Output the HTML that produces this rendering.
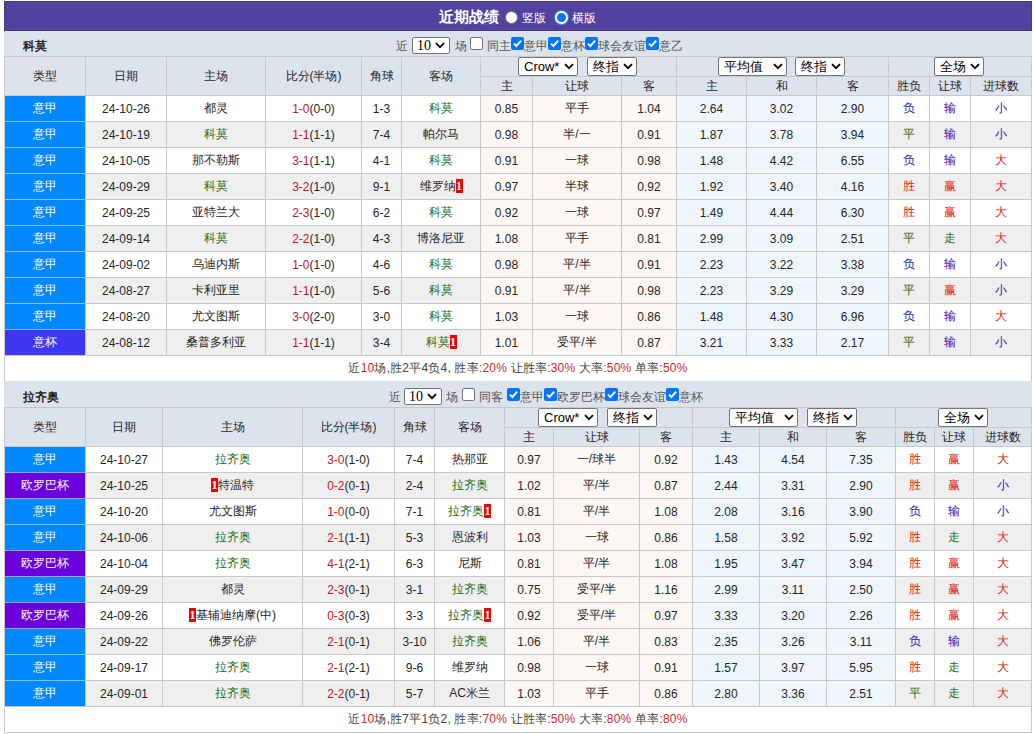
<!DOCTYPE html>
<html><head><meta charset="utf-8"><style>
html,body{margin:0;padding:0;background:#fff;width:1035px;height:734px;overflow:hidden;font-family:"Liberation Sans", sans-serif;}
#root>div{position:absolute;box-sizing:border-box;}
.t{white-space:nowrap;overflow:visible;}
.rc{display:inline-block;background:#e00;color:#fff;font-weight:bold;font-family:"Liberation Serif",serif;font-size:12px;line-height:14px;height:14px;width:7px;text-align:center;vertical-align:middle;position:relative;top:-1px;}
.sel{background:#fff;border:1px solid #767676;border-radius:2px;display:flex;align-items:center;justify-content:space-between;padding:0 3px 0 5px;font-size:13px;color:#000;line-height:16px;}
.sel svg{flex:none;}
.cb{width:13px;height:13px;border-radius:2px;}
.cb.on{background:#0075ff;}
.cb.off{background:#fff;border:1px solid #767676;}
.cb svg{position:absolute;left:0;top:0;}
.radio{width:13px;height:13px;border-radius:50%;}
.radio.off{background:#fff;border:1px solid #767676;}
.radio.on{background:#0075ff;border:2px solid #fff;box-shadow:0 0 0 1px #3d8cf5;}

</style></head><body><div id="root" style="position:relative;width:1035px;height:734px">
<div style="left:4px;top:1px;width:1028px;height:30px;background:#5341a0;border:1px solid #463a86;"></div>
<div class="t" style="left:439px;top:2px;width:61px;height:30px;line-height:30px;color:#fff;font-size:15px;font-weight:bold;text-align:left;">近期战绩</div>
<div style="left:4px;top:31px;width:1028px;height:25px;background:#dce3ed;"></div>
<div class="t" style="left:23px;top:34px;width:24px;height:25px;line-height:25px;color:#262626;font-size:12px;font-weight:bold;text-align:left;">科莫</div>
<div class="t" style="left:396px;top:38px;color:#555;font-size:12px;line-height:16px;white-space:nowrap">近</div>
<div class="sel" style="left:412px;top:37px;width:38px;height:17px;padding-right:4px;padding-left:4px;"><span style="font-family:'Liberation Serif', serif;font-size:14px;position:relative;top:0px;">10</span><svg width="10" height="7" viewBox="0 0 10 7"><path d="M1 1.2 L5 5.2 L9 1.2" stroke="#000" stroke-width="1.8" fill="none"/></svg></div>
<div class="t" style="left:455px;top:38px;color:#555;font-size:12px;line-height:16px;white-space:nowrap">场</div>
<div class="cb off" style="left:470px;top:37px"></div>
<div class="t" style="left:487px;top:38px;color:#555;font-size:12px;line-height:16px;white-space:nowrap">同主</div>
<div class="cb on" style="left:511px;top:37px"><svg width="13" height="13" viewBox="0 0 13 13"><path d="M3 6.6 L5.4 9 L10.2 3.6" stroke="#fff" stroke-width="1.9" fill="none"/></svg></div>
<div class="t" style="left:524px;top:38px;color:#555;font-size:12px;line-height:16px;white-space:nowrap">意甲</div>
<div class="cb on" style="left:548px;top:37px"><svg width="13" height="13" viewBox="0 0 13 13"><path d="M3 6.6 L5.4 9 L10.2 3.6" stroke="#fff" stroke-width="1.9" fill="none"/></svg></div>
<div class="t" style="left:561px;top:38px;color:#555;font-size:12px;line-height:16px;white-space:nowrap">意杯</div>
<div class="cb on" style="left:585px;top:37px"><svg width="13" height="13" viewBox="0 0 13 13"><path d="M3 6.6 L5.4 9 L10.2 3.6" stroke="#fff" stroke-width="1.9" fill="none"/></svg></div>
<div class="t" style="left:598px;top:38px;color:#555;font-size:12px;line-height:16px;white-space:nowrap">球会友谊</div>
<div class="cb on" style="left:646px;top:37px"><svg width="13" height="13" viewBox="0 0 13 13"><path d="M3 6.6 L5.4 9 L10.2 3.6" stroke="#fff" stroke-width="1.9" fill="none"/></svg></div>
<div class="t" style="left:659px;top:38px;color:#555;font-size:12px;line-height:16px;white-space:nowrap">意乙</div>
<div style="left:4px;top:56px;width:1028px;height:39px;background:#dce3ed;"></div>
<div style="left:4px;top:96px;width:1028px;height:25px;background:#fff;"></div>
<div style="left:481px;top:96px;width:195px;height:25px;background:#fdf8f4;"></div>
<div style="left:677px;top:96px;width:211px;height:25px;background:#eef6fb;"></div>
<div style="left:5px;top:96px;width:80px;height:25px;background:#0088ff;"></div>
<div style="left:4px;top:122px;width:1028px;height:25px;background:#efefef;"></div>
<div style="left:481px;top:122px;width:195px;height:25px;background:#fdf8f4;"></div>
<div style="left:677px;top:122px;width:211px;height:25px;background:#eef6fb;"></div>
<div style="left:5px;top:122px;width:80px;height:25px;background:#0088ff;"></div>
<div style="left:4px;top:148px;width:1028px;height:25px;background:#fff;"></div>
<div style="left:481px;top:148px;width:195px;height:25px;background:#fdf8f4;"></div>
<div style="left:677px;top:148px;width:211px;height:25px;background:#eef6fb;"></div>
<div style="left:5px;top:148px;width:80px;height:25px;background:#0088ff;"></div>
<div style="left:4px;top:174px;width:1028px;height:25px;background:#efefef;"></div>
<div style="left:481px;top:174px;width:195px;height:25px;background:#fdf8f4;"></div>
<div style="left:677px;top:174px;width:211px;height:25px;background:#eef6fb;"></div>
<div style="left:5px;top:174px;width:80px;height:25px;background:#0088ff;"></div>
<div style="left:4px;top:200px;width:1028px;height:25px;background:#fff;"></div>
<div style="left:481px;top:200px;width:195px;height:25px;background:#fdf8f4;"></div>
<div style="left:677px;top:200px;width:211px;height:25px;background:#eef6fb;"></div>
<div style="left:5px;top:200px;width:80px;height:25px;background:#0088ff;"></div>
<div style="left:4px;top:226px;width:1028px;height:25px;background:#efefef;"></div>
<div style="left:481px;top:226px;width:195px;height:25px;background:#fdf8f4;"></div>
<div style="left:677px;top:226px;width:211px;height:25px;background:#eef6fb;"></div>
<div style="left:5px;top:226px;width:80px;height:25px;background:#0088ff;"></div>
<div style="left:4px;top:252px;width:1028px;height:25px;background:#fff;"></div>
<div style="left:481px;top:252px;width:195px;height:25px;background:#fdf8f4;"></div>
<div style="left:677px;top:252px;width:211px;height:25px;background:#eef6fb;"></div>
<div style="left:5px;top:252px;width:80px;height:25px;background:#0088ff;"></div>
<div style="left:4px;top:278px;width:1028px;height:25px;background:#efefef;"></div>
<div style="left:481px;top:278px;width:195px;height:25px;background:#fdf8f4;"></div>
<div style="left:677px;top:278px;width:211px;height:25px;background:#eef6fb;"></div>
<div style="left:5px;top:278px;width:80px;height:25px;background:#0088ff;"></div>
<div style="left:4px;top:304px;width:1028px;height:25px;background:#fff;"></div>
<div style="left:481px;top:304px;width:195px;height:25px;background:#fdf8f4;"></div>
<div style="left:677px;top:304px;width:211px;height:25px;background:#eef6fb;"></div>
<div style="left:5px;top:304px;width:80px;height:25px;background:#0088ff;"></div>
<div style="left:4px;top:330px;width:1028px;height:25px;background:#efefef;"></div>
<div style="left:481px;top:330px;width:195px;height:25px;background:#fdf8f4;"></div>
<div style="left:677px;top:330px;width:211px;height:25px;background:#eef6fb;"></div>
<div style="left:5px;top:330px;width:80px;height:25px;background:#3d36f2;"></div>
<div style="left:4px;top:355px;width:1028px;height:26px;background:#fff;"></div>
<div style="left:4px;top:56px;width:1028px;height:1px;background:#c8c8c8;"></div>
<div style="left:480px;top:76px;width:196px;height:1px;background:#c8c8c8;"></div>
<div style="left:676px;top:76px;width:212px;height:1px;background:#c8c8c8;"></div>
<div style="left:888px;top:76px;width:144px;height:1px;background:#c8c8c8;"></div>
<div style="left:4px;top:95px;width:1028px;height:1px;background:#c8c8c8;"></div>
<div style="left:4px;top:121px;width:1028px;height:1px;background:#c8c8c8;"></div>
<div style="left:4px;top:147px;width:1028px;height:1px;background:#c8c8c8;"></div>
<div style="left:4px;top:173px;width:1028px;height:1px;background:#c8c8c8;"></div>
<div style="left:4px;top:199px;width:1028px;height:1px;background:#c8c8c8;"></div>
<div style="left:4px;top:225px;width:1028px;height:1px;background:#c8c8c8;"></div>
<div style="left:4px;top:251px;width:1028px;height:1px;background:#c8c8c8;"></div>
<div style="left:4px;top:277px;width:1028px;height:1px;background:#c8c8c8;"></div>
<div style="left:4px;top:303px;width:1028px;height:1px;background:#c8c8c8;"></div>
<div style="left:4px;top:329px;width:1028px;height:1px;background:#c8c8c8;"></div>
<div style="left:4px;top:355px;width:1028px;height:1px;background:#c8c8c8;"></div>
<div style="left:4px;top:381px;width:1028px;height:1px;background:#c8c8c8;"></div>
<div style="left:4px;top:56px;width:1px;height:326px;background:#c8c8c8;"></div>
<div style="left:85px;top:95px;width:1px;height:260px;background:#c8c8c8;"></div>
<div style="left:85px;top:56px;width:1px;height:39px;background:#c8c8c8;"></div>
<div style="left:166px;top:95px;width:1px;height:260px;background:#c8c8c8;"></div>
<div style="left:166px;top:56px;width:1px;height:39px;background:#c8c8c8;"></div>
<div style="left:265px;top:95px;width:1px;height:260px;background:#c8c8c8;"></div>
<div style="left:265px;top:56px;width:1px;height:39px;background:#c8c8c8;"></div>
<div style="left:361px;top:95px;width:1px;height:260px;background:#c8c8c8;"></div>
<div style="left:361px;top:56px;width:1px;height:39px;background:#c8c8c8;"></div>
<div style="left:401px;top:95px;width:1px;height:260px;background:#c8c8c8;"></div>
<div style="left:401px;top:56px;width:1px;height:39px;background:#c8c8c8;"></div>
<div style="left:480px;top:95px;width:1px;height:260px;background:#c8c8c8;"></div>
<div style="left:480px;top:56px;width:1px;height:39px;background:#c8c8c8;"></div>
<div style="left:532px;top:95px;width:1px;height:260px;background:#c8c8c8;"></div>
<div style="left:532px;top:76px;width:1px;height:19px;background:#c8c8c8;"></div>
<div style="left:621px;top:95px;width:1px;height:260px;background:#c8c8c8;"></div>
<div style="left:621px;top:76px;width:1px;height:19px;background:#c8c8c8;"></div>
<div style="left:676px;top:95px;width:1px;height:260px;background:#c8c8c8;"></div>
<div style="left:676px;top:56px;width:1px;height:39px;background:#c8c8c8;"></div>
<div style="left:746px;top:95px;width:1px;height:260px;background:#c8c8c8;"></div>
<div style="left:746px;top:76px;width:1px;height:19px;background:#c8c8c8;"></div>
<div style="left:816px;top:95px;width:1px;height:260px;background:#c8c8c8;"></div>
<div style="left:816px;top:76px;width:1px;height:19px;background:#c8c8c8;"></div>
<div style="left:888px;top:95px;width:1px;height:260px;background:#c8c8c8;"></div>
<div style="left:888px;top:56px;width:1px;height:39px;background:#c8c8c8;"></div>
<div style="left:929px;top:95px;width:1px;height:260px;background:#c8c8c8;"></div>
<div style="left:929px;top:76px;width:1px;height:19px;background:#c8c8c8;"></div>
<div style="left:970px;top:95px;width:1px;height:260px;background:#c8c8c8;"></div>
<div style="left:970px;top:76px;width:1px;height:19px;background:#c8c8c8;"></div>
<div style="left:1031px;top:56px;width:1px;height:326px;background:#c8c8c8;"></div>
<div style="left:5px;top:121px;width:80px;height:1px;background:#7fc3ff;"></div>
<div style="left:5px;top:147px;width:80px;height:1px;background:#7fc3ff;"></div>
<div style="left:5px;top:173px;width:80px;height:1px;background:#7fc3ff;"></div>
<div style="left:5px;top:199px;width:80px;height:1px;background:#7fc3ff;"></div>
<div style="left:5px;top:225px;width:80px;height:1px;background:#7fc3ff;"></div>
<div style="left:5px;top:251px;width:80px;height:1px;background:#7fc3ff;"></div>
<div style="left:5px;top:277px;width:80px;height:1px;background:#7fc3ff;"></div>
<div style="left:5px;top:303px;width:80px;height:1px;background:#7fc3ff;"></div>
<div style="left:5px;top:329px;width:80px;height:1px;background:#8eaffb;"></div>
<div class="t" style="left:5px;top:57px;width:80px;height:38px;line-height:38px;color:#262626;font-size:12px;font-weight:normal;text-align:center;">类型</div>
<div class="t" style="left:86px;top:57px;width:80px;height:38px;line-height:38px;color:#262626;font-size:12px;font-weight:normal;text-align:center;">日期</div>
<div class="t" style="left:167px;top:57px;width:98px;height:38px;line-height:38px;color:#262626;font-size:12px;font-weight:normal;text-align:center;">主场</div>
<div class="t" style="left:266px;top:57px;width:95px;height:38px;line-height:38px;color:#262626;font-size:12px;font-weight:normal;text-align:center;">比分(半场)</div>
<div class="t" style="left:362px;top:57px;width:39px;height:38px;line-height:38px;color:#262626;font-size:12px;font-weight:normal;text-align:center;">角球</div>
<div class="t" style="left:402px;top:57px;width:78px;height:38px;line-height:38px;color:#262626;font-size:12px;font-weight:normal;text-align:center;">客场</div>
<div class="t" style="left:481px;top:77px;width:51px;height:18px;line-height:18px;color:#262626;font-size:12px;font-weight:normal;text-align:center;">主</div>
<div class="t" style="left:533px;top:77px;width:88px;height:18px;line-height:18px;color:#262626;font-size:12px;font-weight:normal;text-align:center;">让球</div>
<div class="t" style="left:622px;top:77px;width:54px;height:18px;line-height:18px;color:#262626;font-size:12px;font-weight:normal;text-align:center;">客</div>
<div class="t" style="left:677px;top:77px;width:69px;height:18px;line-height:18px;color:#262626;font-size:12px;font-weight:normal;text-align:center;">主</div>
<div class="t" style="left:747px;top:77px;width:69px;height:18px;line-height:18px;color:#262626;font-size:12px;font-weight:normal;text-align:center;">和</div>
<div class="t" style="left:817px;top:77px;width:71px;height:18px;line-height:18px;color:#262626;font-size:12px;font-weight:normal;text-align:center;">客</div>
<div class="t" style="left:889px;top:77px;width:40px;height:18px;line-height:18px;color:#262626;font-size:12px;font-weight:normal;text-align:center;">胜负</div>
<div class="t" style="left:930px;top:77px;width:40px;height:18px;line-height:18px;color:#262626;font-size:12px;font-weight:normal;text-align:center;">让球</div>
<div class="t" style="left:971px;top:77px;width:60px;height:18px;line-height:18px;color:#262626;font-size:12px;font-weight:normal;text-align:center;">进球数</div>
<div class="t" style="left:5px;top:96px;width:80px;height:25px;line-height:25px;color:#fff;font-size:12px;font-weight:normal;text-align:center;">意甲</div>
<div class="t" style="left:86px;top:97px;width:80px;height:25px;line-height:25px;color:#262626;font-size:12px;font-weight:normal;text-align:center;">24-10-26</div>
<div class="t" style="left:167px;top:96px;width:98px;height:25px;line-height:25px;color:#262626;font-size:12px;font-weight:normal;text-align:center;">都灵</div>
<div class="t" style="left:266px;top:97px;width:95px;height:25px;line-height:25px;color:#262626;font-size:12px;font-weight:normal;text-align:center;"><span style="color:#cc1222">1-0</span>(0-0)</div>
<div class="t" style="left:362px;top:97px;width:39px;height:25px;line-height:25px;color:#262626;font-size:12px;font-weight:normal;text-align:center;">1-3</div>
<div class="t" style="left:402px;top:96px;width:78px;height:25px;line-height:25px;color:#1e6e16;font-size:12px;font-weight:normal;text-align:center;">科莫</div>
<div class="t" style="left:481px;top:97px;width:51px;height:25px;line-height:25px;color:#262626;font-size:12px;font-weight:normal;text-align:center;">0.85</div>
<div class="t" style="left:533px;top:96px;width:88px;height:25px;line-height:25px;color:#262626;font-size:12px;font-weight:normal;text-align:center;">平手</div>
<div class="t" style="left:622px;top:97px;width:54px;height:25px;line-height:25px;color:#262626;font-size:12px;font-weight:normal;text-align:center;">1.04</div>
<div class="t" style="left:677px;top:97px;width:69px;height:25px;line-height:25px;color:#262626;font-size:12px;font-weight:normal;text-align:center;">2.64</div>
<div class="t" style="left:747px;top:97px;width:69px;height:25px;line-height:25px;color:#262626;font-size:12px;font-weight:normal;text-align:center;">3.02</div>
<div class="t" style="left:817px;top:97px;width:71px;height:25px;line-height:25px;color:#262626;font-size:12px;font-weight:normal;text-align:center;">2.90</div>
<div class="t" style="left:889px;top:96px;width:40px;height:25px;line-height:25px;color:#1818b0;font-size:12px;font-weight:normal;text-align:center;">负</div>
<div class="t" style="left:930px;top:96px;width:40px;height:25px;line-height:25px;color:#1818b0;font-size:12px;font-weight:normal;text-align:center;">输</div>
<div class="t" style="left:971px;top:96px;width:60px;height:25px;line-height:25px;color:#1818b0;font-size:12px;font-weight:normal;text-align:center;">小</div>
<div class="t" style="left:5px;top:122px;width:80px;height:25px;line-height:25px;color:#fff;font-size:12px;font-weight:normal;text-align:center;">意甲</div>
<div class="t" style="left:86px;top:123px;width:80px;height:25px;line-height:25px;color:#262626;font-size:12px;font-weight:normal;text-align:center;">24-10-19</div>
<div class="t" style="left:167px;top:122px;width:98px;height:25px;line-height:25px;color:#1e6e16;font-size:12px;font-weight:normal;text-align:center;">科莫</div>
<div class="t" style="left:266px;top:123px;width:95px;height:25px;line-height:25px;color:#262626;font-size:12px;font-weight:normal;text-align:center;"><span style="color:#cc1222">1-1</span>(1-1)</div>
<div class="t" style="left:362px;top:123px;width:39px;height:25px;line-height:25px;color:#262626;font-size:12px;font-weight:normal;text-align:center;">7-4</div>
<div class="t" style="left:402px;top:122px;width:78px;height:25px;line-height:25px;color:#262626;font-size:12px;font-weight:normal;text-align:center;">帕尔马</div>
<div class="t" style="left:481px;top:123px;width:51px;height:25px;line-height:25px;color:#262626;font-size:12px;font-weight:normal;text-align:center;">0.98</div>
<div class="t" style="left:533px;top:122px;width:88px;height:25px;line-height:25px;color:#262626;font-size:12px;font-weight:normal;text-align:center;">半/一</div>
<div class="t" style="left:622px;top:123px;width:54px;height:25px;line-height:25px;color:#262626;font-size:12px;font-weight:normal;text-align:center;">0.91</div>
<div class="t" style="left:677px;top:123px;width:69px;height:25px;line-height:25px;color:#262626;font-size:12px;font-weight:normal;text-align:center;">1.87</div>
<div class="t" style="left:747px;top:123px;width:69px;height:25px;line-height:25px;color:#262626;font-size:12px;font-weight:normal;text-align:center;">3.78</div>
<div class="t" style="left:817px;top:123px;width:71px;height:25px;line-height:25px;color:#262626;font-size:12px;font-weight:normal;text-align:center;">3.94</div>
<div class="t" style="left:889px;top:122px;width:40px;height:25px;line-height:25px;color:#1e6e16;font-size:12px;font-weight:normal;text-align:center;">平</div>
<div class="t" style="left:930px;top:122px;width:40px;height:25px;line-height:25px;color:#1818b0;font-size:12px;font-weight:normal;text-align:center;">输</div>
<div class="t" style="left:971px;top:122px;width:60px;height:25px;line-height:25px;color:#1818b0;font-size:12px;font-weight:normal;text-align:center;">小</div>
<div class="t" style="left:5px;top:148px;width:80px;height:25px;line-height:25px;color:#fff;font-size:12px;font-weight:normal;text-align:center;">意甲</div>
<div class="t" style="left:86px;top:149px;width:80px;height:25px;line-height:25px;color:#262626;font-size:12px;font-weight:normal;text-align:center;">24-10-05</div>
<div class="t" style="left:167px;top:148px;width:98px;height:25px;line-height:25px;color:#262626;font-size:12px;font-weight:normal;text-align:center;">那不勒斯</div>
<div class="t" style="left:266px;top:149px;width:95px;height:25px;line-height:25px;color:#262626;font-size:12px;font-weight:normal;text-align:center;"><span style="color:#cc1222">3-1</span>(1-1)</div>
<div class="t" style="left:362px;top:149px;width:39px;height:25px;line-height:25px;color:#262626;font-size:12px;font-weight:normal;text-align:center;">4-1</div>
<div class="t" style="left:402px;top:148px;width:78px;height:25px;line-height:25px;color:#1e6e16;font-size:12px;font-weight:normal;text-align:center;">科莫</div>
<div class="t" style="left:481px;top:149px;width:51px;height:25px;line-height:25px;color:#262626;font-size:12px;font-weight:normal;text-align:center;">0.91</div>
<div class="t" style="left:533px;top:148px;width:88px;height:25px;line-height:25px;color:#262626;font-size:12px;font-weight:normal;text-align:center;">一球</div>
<div class="t" style="left:622px;top:149px;width:54px;height:25px;line-height:25px;color:#262626;font-size:12px;font-weight:normal;text-align:center;">0.98</div>
<div class="t" style="left:677px;top:149px;width:69px;height:25px;line-height:25px;color:#262626;font-size:12px;font-weight:normal;text-align:center;">1.48</div>
<div class="t" style="left:747px;top:149px;width:69px;height:25px;line-height:25px;color:#262626;font-size:12px;font-weight:normal;text-align:center;">4.42</div>
<div class="t" style="left:817px;top:149px;width:71px;height:25px;line-height:25px;color:#262626;font-size:12px;font-weight:normal;text-align:center;">6.55</div>
<div class="t" style="left:889px;top:148px;width:40px;height:25px;line-height:25px;color:#1818b0;font-size:12px;font-weight:normal;text-align:center;">负</div>
<div class="t" style="left:930px;top:148px;width:40px;height:25px;line-height:25px;color:#1818b0;font-size:12px;font-weight:normal;text-align:center;">输</div>
<div class="t" style="left:971px;top:148px;width:60px;height:25px;line-height:25px;color:#dc1a14;font-size:12px;font-weight:normal;text-align:center;">大</div>
<div class="t" style="left:5px;top:174px;width:80px;height:25px;line-height:25px;color:#fff;font-size:12px;font-weight:normal;text-align:center;">意甲</div>
<div class="t" style="left:86px;top:175px;width:80px;height:25px;line-height:25px;color:#262626;font-size:12px;font-weight:normal;text-align:center;">24-09-29</div>
<div class="t" style="left:167px;top:174px;width:98px;height:25px;line-height:25px;color:#1e6e16;font-size:12px;font-weight:normal;text-align:center;">科莫</div>
<div class="t" style="left:266px;top:175px;width:95px;height:25px;line-height:25px;color:#262626;font-size:12px;font-weight:normal;text-align:center;"><span style="color:#cc1222">3-2</span>(1-0)</div>
<div class="t" style="left:362px;top:175px;width:39px;height:25px;line-height:25px;color:#262626;font-size:12px;font-weight:normal;text-align:center;">9-1</div>
<div class="t" style="left:402px;top:174px;width:78px;height:25px;line-height:25px;color:#262626;font-size:12px;font-weight:normal;text-align:center;">维罗纳<span class="rc">1</span></div>
<div class="t" style="left:481px;top:175px;width:51px;height:25px;line-height:25px;color:#262626;font-size:12px;font-weight:normal;text-align:center;">0.97</div>
<div class="t" style="left:533px;top:174px;width:88px;height:25px;line-height:25px;color:#262626;font-size:12px;font-weight:normal;text-align:center;">半球</div>
<div class="t" style="left:622px;top:175px;width:54px;height:25px;line-height:25px;color:#262626;font-size:12px;font-weight:normal;text-align:center;">0.92</div>
<div class="t" style="left:677px;top:175px;width:69px;height:25px;line-height:25px;color:#262626;font-size:12px;font-weight:normal;text-align:center;">1.92</div>
<div class="t" style="left:747px;top:175px;width:69px;height:25px;line-height:25px;color:#262626;font-size:12px;font-weight:normal;text-align:center;">3.40</div>
<div class="t" style="left:817px;top:175px;width:71px;height:25px;line-height:25px;color:#262626;font-size:12px;font-weight:normal;text-align:center;">4.16</div>
<div class="t" style="left:889px;top:174px;width:40px;height:25px;line-height:25px;color:#dc1a14;font-size:12px;font-weight:normal;text-align:center;">胜</div>
<div class="t" style="left:930px;top:174px;width:40px;height:25px;line-height:25px;color:#dc1a14;font-size:12px;font-weight:normal;text-align:center;">赢</div>
<div class="t" style="left:971px;top:174px;width:60px;height:25px;line-height:25px;color:#dc1a14;font-size:12px;font-weight:normal;text-align:center;">大</div>
<div class="t" style="left:5px;top:200px;width:80px;height:25px;line-height:25px;color:#fff;font-size:12px;font-weight:normal;text-align:center;">意甲</div>
<div class="t" style="left:86px;top:201px;width:80px;height:25px;line-height:25px;color:#262626;font-size:12px;font-weight:normal;text-align:center;">24-09-25</div>
<div class="t" style="left:167px;top:200px;width:98px;height:25px;line-height:25px;color:#262626;font-size:12px;font-weight:normal;text-align:center;">亚特兰大</div>
<div class="t" style="left:266px;top:201px;width:95px;height:25px;line-height:25px;color:#262626;font-size:12px;font-weight:normal;text-align:center;"><span style="color:#cc1222">2-3</span>(1-0)</div>
<div class="t" style="left:362px;top:201px;width:39px;height:25px;line-height:25px;color:#262626;font-size:12px;font-weight:normal;text-align:center;">6-2</div>
<div class="t" style="left:402px;top:200px;width:78px;height:25px;line-height:25px;color:#1e6e16;font-size:12px;font-weight:normal;text-align:center;">科莫</div>
<div class="t" style="left:481px;top:201px;width:51px;height:25px;line-height:25px;color:#262626;font-size:12px;font-weight:normal;text-align:center;">0.92</div>
<div class="t" style="left:533px;top:200px;width:88px;height:25px;line-height:25px;color:#262626;font-size:12px;font-weight:normal;text-align:center;">一球</div>
<div class="t" style="left:622px;top:201px;width:54px;height:25px;line-height:25px;color:#262626;font-size:12px;font-weight:normal;text-align:center;">0.97</div>
<div class="t" style="left:677px;top:201px;width:69px;height:25px;line-height:25px;color:#262626;font-size:12px;font-weight:normal;text-align:center;">1.49</div>
<div class="t" style="left:747px;top:201px;width:69px;height:25px;line-height:25px;color:#262626;font-size:12px;font-weight:normal;text-align:center;">4.44</div>
<div class="t" style="left:817px;top:201px;width:71px;height:25px;line-height:25px;color:#262626;font-size:12px;font-weight:normal;text-align:center;">6.30</div>
<div class="t" style="left:889px;top:200px;width:40px;height:25px;line-height:25px;color:#dc1a14;font-size:12px;font-weight:normal;text-align:center;">胜</div>
<div class="t" style="left:930px;top:200px;width:40px;height:25px;line-height:25px;color:#dc1a14;font-size:12px;font-weight:normal;text-align:center;">赢</div>
<div class="t" style="left:971px;top:200px;width:60px;height:25px;line-height:25px;color:#dc1a14;font-size:12px;font-weight:normal;text-align:center;">大</div>
<div class="t" style="left:5px;top:226px;width:80px;height:25px;line-height:25px;color:#fff;font-size:12px;font-weight:normal;text-align:center;">意甲</div>
<div class="t" style="left:86px;top:227px;width:80px;height:25px;line-height:25px;color:#262626;font-size:12px;font-weight:normal;text-align:center;">24-09-14</div>
<div class="t" style="left:167px;top:226px;width:98px;height:25px;line-height:25px;color:#1e6e16;font-size:12px;font-weight:normal;text-align:center;">科莫</div>
<div class="t" style="left:266px;top:227px;width:95px;height:25px;line-height:25px;color:#262626;font-size:12px;font-weight:normal;text-align:center;"><span style="color:#cc1222">2-2</span>(1-0)</div>
<div class="t" style="left:362px;top:227px;width:39px;height:25px;line-height:25px;color:#262626;font-size:12px;font-weight:normal;text-align:center;">4-3</div>
<div class="t" style="left:402px;top:226px;width:78px;height:25px;line-height:25px;color:#262626;font-size:12px;font-weight:normal;text-align:center;">博洛尼亚</div>
<div class="t" style="left:481px;top:227px;width:51px;height:25px;line-height:25px;color:#262626;font-size:12px;font-weight:normal;text-align:center;">1.08</div>
<div class="t" style="left:533px;top:226px;width:88px;height:25px;line-height:25px;color:#262626;font-size:12px;font-weight:normal;text-align:center;">平手</div>
<div class="t" style="left:622px;top:227px;width:54px;height:25px;line-height:25px;color:#262626;font-size:12px;font-weight:normal;text-align:center;">0.81</div>
<div class="t" style="left:677px;top:227px;width:69px;height:25px;line-height:25px;color:#262626;font-size:12px;font-weight:normal;text-align:center;">2.99</div>
<div class="t" style="left:747px;top:227px;width:69px;height:25px;line-height:25px;color:#262626;font-size:12px;font-weight:normal;text-align:center;">3.09</div>
<div class="t" style="left:817px;top:227px;width:71px;height:25px;line-height:25px;color:#262626;font-size:12px;font-weight:normal;text-align:center;">2.51</div>
<div class="t" style="left:889px;top:226px;width:40px;height:25px;line-height:25px;color:#1e6e16;font-size:12px;font-weight:normal;text-align:center;">平</div>
<div class="t" style="left:930px;top:226px;width:40px;height:25px;line-height:25px;color:#1e6e16;font-size:12px;font-weight:normal;text-align:center;">走</div>
<div class="t" style="left:971px;top:226px;width:60px;height:25px;line-height:25px;color:#dc1a14;font-size:12px;font-weight:normal;text-align:center;">大</div>
<div class="t" style="left:5px;top:252px;width:80px;height:25px;line-height:25px;color:#fff;font-size:12px;font-weight:normal;text-align:center;">意甲</div>
<div class="t" style="left:86px;top:253px;width:80px;height:25px;line-height:25px;color:#262626;font-size:12px;font-weight:normal;text-align:center;">24-09-02</div>
<div class="t" style="left:167px;top:252px;width:98px;height:25px;line-height:25px;color:#262626;font-size:12px;font-weight:normal;text-align:center;">乌迪内斯</div>
<div class="t" style="left:266px;top:253px;width:95px;height:25px;line-height:25px;color:#262626;font-size:12px;font-weight:normal;text-align:center;"><span style="color:#cc1222">1-0</span>(1-0)</div>
<div class="t" style="left:362px;top:253px;width:39px;height:25px;line-height:25px;color:#262626;font-size:12px;font-weight:normal;text-align:center;">4-6</div>
<div class="t" style="left:402px;top:252px;width:78px;height:25px;line-height:25px;color:#1e6e16;font-size:12px;font-weight:normal;text-align:center;">科莫</div>
<div class="t" style="left:481px;top:253px;width:51px;height:25px;line-height:25px;color:#262626;font-size:12px;font-weight:normal;text-align:center;">0.98</div>
<div class="t" style="left:533px;top:252px;width:88px;height:25px;line-height:25px;color:#262626;font-size:12px;font-weight:normal;text-align:center;">平/半</div>
<div class="t" style="left:622px;top:253px;width:54px;height:25px;line-height:25px;color:#262626;font-size:12px;font-weight:normal;text-align:center;">0.91</div>
<div class="t" style="left:677px;top:253px;width:69px;height:25px;line-height:25px;color:#262626;font-size:12px;font-weight:normal;text-align:center;">2.23</div>
<div class="t" style="left:747px;top:253px;width:69px;height:25px;line-height:25px;color:#262626;font-size:12px;font-weight:normal;text-align:center;">3.22</div>
<div class="t" style="left:817px;top:253px;width:71px;height:25px;line-height:25px;color:#262626;font-size:12px;font-weight:normal;text-align:center;">3.38</div>
<div class="t" style="left:889px;top:252px;width:40px;height:25px;line-height:25px;color:#1818b0;font-size:12px;font-weight:normal;text-align:center;">负</div>
<div class="t" style="left:930px;top:252px;width:40px;height:25px;line-height:25px;color:#1818b0;font-size:12px;font-weight:normal;text-align:center;">输</div>
<div class="t" style="left:971px;top:252px;width:60px;height:25px;line-height:25px;color:#1818b0;font-size:12px;font-weight:normal;text-align:center;">小</div>
<div class="t" style="left:5px;top:278px;width:80px;height:25px;line-height:25px;color:#fff;font-size:12px;font-weight:normal;text-align:center;">意甲</div>
<div class="t" style="left:86px;top:279px;width:80px;height:25px;line-height:25px;color:#262626;font-size:12px;font-weight:normal;text-align:center;">24-08-27</div>
<div class="t" style="left:167px;top:278px;width:98px;height:25px;line-height:25px;color:#262626;font-size:12px;font-weight:normal;text-align:center;">卡利亚里</div>
<div class="t" style="left:266px;top:279px;width:95px;height:25px;line-height:25px;color:#262626;font-size:12px;font-weight:normal;text-align:center;"><span style="color:#cc1222">1-1</span>(1-0)</div>
<div class="t" style="left:362px;top:279px;width:39px;height:25px;line-height:25px;color:#262626;font-size:12px;font-weight:normal;text-align:center;">5-6</div>
<div class="t" style="left:402px;top:278px;width:78px;height:25px;line-height:25px;color:#1e6e16;font-size:12px;font-weight:normal;text-align:center;">科莫</div>
<div class="t" style="left:481px;top:279px;width:51px;height:25px;line-height:25px;color:#262626;font-size:12px;font-weight:normal;text-align:center;">0.91</div>
<div class="t" style="left:533px;top:278px;width:88px;height:25px;line-height:25px;color:#262626;font-size:12px;font-weight:normal;text-align:center;">平/半</div>
<div class="t" style="left:622px;top:279px;width:54px;height:25px;line-height:25px;color:#262626;font-size:12px;font-weight:normal;text-align:center;">0.98</div>
<div class="t" style="left:677px;top:279px;width:69px;height:25px;line-height:25px;color:#262626;font-size:12px;font-weight:normal;text-align:center;">2.23</div>
<div class="t" style="left:747px;top:279px;width:69px;height:25px;line-height:25px;color:#262626;font-size:12px;font-weight:normal;text-align:center;">3.29</div>
<div class="t" style="left:817px;top:279px;width:71px;height:25px;line-height:25px;color:#262626;font-size:12px;font-weight:normal;text-align:center;">3.29</div>
<div class="t" style="left:889px;top:278px;width:40px;height:25px;line-height:25px;color:#1e6e16;font-size:12px;font-weight:normal;text-align:center;">平</div>
<div class="t" style="left:930px;top:278px;width:40px;height:25px;line-height:25px;color:#dc1a14;font-size:12px;font-weight:normal;text-align:center;">赢</div>
<div class="t" style="left:971px;top:278px;width:60px;height:25px;line-height:25px;color:#1818b0;font-size:12px;font-weight:normal;text-align:center;">小</div>
<div class="t" style="left:5px;top:304px;width:80px;height:25px;line-height:25px;color:#fff;font-size:12px;font-weight:normal;text-align:center;">意甲</div>
<div class="t" style="left:86px;top:305px;width:80px;height:25px;line-height:25px;color:#262626;font-size:12px;font-weight:normal;text-align:center;">24-08-20</div>
<div class="t" style="left:167px;top:304px;width:98px;height:25px;line-height:25px;color:#262626;font-size:12px;font-weight:normal;text-align:center;">尤文图斯</div>
<div class="t" style="left:266px;top:305px;width:95px;height:25px;line-height:25px;color:#262626;font-size:12px;font-weight:normal;text-align:center;"><span style="color:#cc1222">3-0</span>(2-0)</div>
<div class="t" style="left:362px;top:305px;width:39px;height:25px;line-height:25px;color:#262626;font-size:12px;font-weight:normal;text-align:center;">3-0</div>
<div class="t" style="left:402px;top:304px;width:78px;height:25px;line-height:25px;color:#1e6e16;font-size:12px;font-weight:normal;text-align:center;">科莫</div>
<div class="t" style="left:481px;top:305px;width:51px;height:25px;line-height:25px;color:#262626;font-size:12px;font-weight:normal;text-align:center;">1.03</div>
<div class="t" style="left:533px;top:304px;width:88px;height:25px;line-height:25px;color:#262626;font-size:12px;font-weight:normal;text-align:center;">一球</div>
<div class="t" style="left:622px;top:305px;width:54px;height:25px;line-height:25px;color:#262626;font-size:12px;font-weight:normal;text-align:center;">0.86</div>
<div class="t" style="left:677px;top:305px;width:69px;height:25px;line-height:25px;color:#262626;font-size:12px;font-weight:normal;text-align:center;">1.48</div>
<div class="t" style="left:747px;top:305px;width:69px;height:25px;line-height:25px;color:#262626;font-size:12px;font-weight:normal;text-align:center;">4.30</div>
<div class="t" style="left:817px;top:305px;width:71px;height:25px;line-height:25px;color:#262626;font-size:12px;font-weight:normal;text-align:center;">6.96</div>
<div class="t" style="left:889px;top:304px;width:40px;height:25px;line-height:25px;color:#1818b0;font-size:12px;font-weight:normal;text-align:center;">负</div>
<div class="t" style="left:930px;top:304px;width:40px;height:25px;line-height:25px;color:#1818b0;font-size:12px;font-weight:normal;text-align:center;">输</div>
<div class="t" style="left:971px;top:304px;width:60px;height:25px;line-height:25px;color:#dc1a14;font-size:12px;font-weight:normal;text-align:center;">大</div>
<div class="t" style="left:5px;top:330px;width:80px;height:25px;line-height:25px;color:#fff;font-size:12px;font-weight:normal;text-align:center;">意杯</div>
<div class="t" style="left:86px;top:331px;width:80px;height:25px;line-height:25px;color:#262626;font-size:12px;font-weight:normal;text-align:center;">24-08-12</div>
<div class="t" style="left:167px;top:330px;width:98px;height:25px;line-height:25px;color:#262626;font-size:12px;font-weight:normal;text-align:center;">桑普多利亚</div>
<div class="t" style="left:266px;top:331px;width:95px;height:25px;line-height:25px;color:#262626;font-size:12px;font-weight:normal;text-align:center;"><span style="color:#cc1222">1-1</span>(1-1)</div>
<div class="t" style="left:362px;top:331px;width:39px;height:25px;line-height:25px;color:#262626;font-size:12px;font-weight:normal;text-align:center;">3-4</div>
<div class="t" style="left:402px;top:330px;width:78px;height:25px;line-height:25px;color:#1e6e16;font-size:12px;font-weight:normal;text-align:center;">科莫<span class="rc">1</span></div>
<div class="t" style="left:481px;top:331px;width:51px;height:25px;line-height:25px;color:#262626;font-size:12px;font-weight:normal;text-align:center;">1.01</div>
<div class="t" style="left:533px;top:330px;width:88px;height:25px;line-height:25px;color:#262626;font-size:12px;font-weight:normal;text-align:center;">受平/半</div>
<div class="t" style="left:622px;top:331px;width:54px;height:25px;line-height:25px;color:#262626;font-size:12px;font-weight:normal;text-align:center;">0.87</div>
<div class="t" style="left:677px;top:331px;width:69px;height:25px;line-height:25px;color:#262626;font-size:12px;font-weight:normal;text-align:center;">3.21</div>
<div class="t" style="left:747px;top:331px;width:69px;height:25px;line-height:25px;color:#262626;font-size:12px;font-weight:normal;text-align:center;">3.33</div>
<div class="t" style="left:817px;top:331px;width:71px;height:25px;line-height:25px;color:#262626;font-size:12px;font-weight:normal;text-align:center;">2.17</div>
<div class="t" style="left:889px;top:330px;width:40px;height:25px;line-height:25px;color:#1e6e16;font-size:12px;font-weight:normal;text-align:center;">平</div>
<div class="t" style="left:930px;top:330px;width:40px;height:25px;line-height:25px;color:#1818b0;font-size:12px;font-weight:normal;text-align:center;">输</div>
<div class="t" style="left:971px;top:330px;width:60px;height:25px;line-height:25px;color:#1818b0;font-size:12px;font-weight:normal;text-align:center;">小</div>
<div class="t" style="left:5px;top:356px;width:1026px;height:25px;line-height:25px;color:#444;font-size:12px;font-weight:normal;text-align:center;letter-spacing:0.2px">近<span style="color:#d02828">10</span>场,胜2平4负4, 胜率:<span style="color:#d02828">20%</span> 让胜率:<span style="color:#d02828">30%</span> 大率:<span style="color:#d02828">50%</span> 单率:<span style="color:#d02828">50%</span></div>
<div class="sel" style="left:518px;top:57px;width:60px;height:19px;"><span style="font-family:'Liberation Sans', sans-serif;">Crow*</span><svg width="10" height="7" viewBox="0 0 10 7"><path d="M1 1.2 L5 5.2 L9 1.2" stroke="#000" stroke-width="1.8" fill="none"/></svg></div>
<div class="sel" style="left:587px;top:57px;width:50px;height:19px;"><span style="font-family:'Liberation Sans', sans-serif;">终指</span><svg width="10" height="7" viewBox="0 0 10 7"><path d="M1 1.2 L5 5.2 L9 1.2" stroke="#000" stroke-width="1.8" fill="none"/></svg></div>
<div class="sel" style="left:718px;top:57px;width:69px;height:19px;"><span style="font-family:'Liberation Sans', sans-serif;">平均值</span><svg width="10" height="7" viewBox="0 0 10 7"><path d="M1 1.2 L5 5.2 L9 1.2" stroke="#000" stroke-width="1.8" fill="none"/></svg></div>
<div class="sel" style="left:795px;top:57px;width:50px;height:19px;"><span style="font-family:'Liberation Sans', sans-serif;">终指</span><svg width="10" height="7" viewBox="0 0 10 7"><path d="M1 1.2 L5 5.2 L9 1.2" stroke="#000" stroke-width="1.8" fill="none"/></svg></div>
<div class="sel" style="left:934px;top:57px;width:50px;height:19px;"><span style="font-family:'Liberation Sans', sans-serif;">全场</span><svg width="10" height="7" viewBox="0 0 10 7"><path d="M1 1.2 L5 5.2 L9 1.2" stroke="#000" stroke-width="1.8" fill="none"/></svg></div>
<div style="left:4px;top:381px;width:1028px;height:26px;background:#dce3ed;"></div>
<div class="t" style="left:23px;top:384px;width:36px;height:26px;line-height:26px;color:#262626;font-size:12px;font-weight:bold;text-align:left;">拉齐奥</div>
<div class="t" style="left:389px;top:389px;color:#555;font-size:12px;line-height:16px;white-space:nowrap">近</div>
<div class="sel" style="left:404px;top:388px;width:38px;height:17px;padding-right:4px;padding-left:4px;"><span style="font-family:'Liberation Serif', serif;font-size:14px;position:relative;top:0px;">10</span><svg width="10" height="7" viewBox="0 0 10 7"><path d="M1 1.2 L5 5.2 L9 1.2" stroke="#000" stroke-width="1.8" fill="none"/></svg></div>
<div class="t" style="left:446px;top:389px;color:#555;font-size:12px;line-height:16px;white-space:nowrap">场</div>
<div class="cb off" style="left:462px;top:388px"></div>
<div class="t" style="left:479px;top:389px;color:#555;font-size:12px;line-height:16px;white-space:nowrap">同客</div>
<div class="cb on" style="left:507px;top:388px"><svg width="13" height="13" viewBox="0 0 13 13"><path d="M3 6.6 L5.4 9 L10.2 3.6" stroke="#fff" stroke-width="1.9" fill="none"/></svg></div>
<div class="t" style="left:520px;top:389px;color:#555;font-size:12px;line-height:16px;white-space:nowrap">意甲</div>
<div class="cb on" style="left:544px;top:388px"><svg width="13" height="13" viewBox="0 0 13 13"><path d="M3 6.6 L5.4 9 L10.2 3.6" stroke="#fff" stroke-width="1.9" fill="none"/></svg></div>
<div class="t" style="left:557px;top:389px;color:#555;font-size:12px;line-height:16px;white-space:nowrap">欧罗巴杯</div>
<div class="cb on" style="left:605px;top:388px"><svg width="13" height="13" viewBox="0 0 13 13"><path d="M3 6.6 L5.4 9 L10.2 3.6" stroke="#fff" stroke-width="1.9" fill="none"/></svg></div>
<div class="t" style="left:618px;top:389px;color:#555;font-size:12px;line-height:16px;white-space:nowrap">球会友谊</div>
<div class="cb on" style="left:666px;top:388px"><svg width="13" height="13" viewBox="0 0 13 13"><path d="M3 6.6 L5.4 9 L10.2 3.6" stroke="#fff" stroke-width="1.9" fill="none"/></svg></div>
<div class="t" style="left:679px;top:389px;color:#555;font-size:12px;line-height:16px;white-space:nowrap">意杯</div>
<div style="left:4px;top:407px;width:1028px;height:39px;background:#dce3ed;"></div>
<div style="left:4px;top:447px;width:1028px;height:25px;background:#fff;"></div>
<div style="left:505px;top:447px;width:187px;height:25px;background:#fdf8f4;"></div>
<div style="left:693px;top:447px;width:202px;height:25px;background:#eef6fb;"></div>
<div style="left:5px;top:447px;width:80px;height:25px;background:#0088ff;"></div>
<div style="left:4px;top:473px;width:1028px;height:25px;background:#efefef;"></div>
<div style="left:505px;top:473px;width:187px;height:25px;background:#fdf8f4;"></div>
<div style="left:693px;top:473px;width:202px;height:25px;background:#eef6fb;"></div>
<div style="left:5px;top:473px;width:80px;height:25px;background:#6a00dc;"></div>
<div style="left:4px;top:499px;width:1028px;height:25px;background:#fff;"></div>
<div style="left:505px;top:499px;width:187px;height:25px;background:#fdf8f4;"></div>
<div style="left:693px;top:499px;width:202px;height:25px;background:#eef6fb;"></div>
<div style="left:5px;top:499px;width:80px;height:25px;background:#0088ff;"></div>
<div style="left:4px;top:525px;width:1028px;height:25px;background:#efefef;"></div>
<div style="left:505px;top:525px;width:187px;height:25px;background:#fdf8f4;"></div>
<div style="left:693px;top:525px;width:202px;height:25px;background:#eef6fb;"></div>
<div style="left:5px;top:525px;width:80px;height:25px;background:#0088ff;"></div>
<div style="left:4px;top:551px;width:1028px;height:25px;background:#fff;"></div>
<div style="left:505px;top:551px;width:187px;height:25px;background:#fdf8f4;"></div>
<div style="left:693px;top:551px;width:202px;height:25px;background:#eef6fb;"></div>
<div style="left:5px;top:551px;width:80px;height:25px;background:#6a00dc;"></div>
<div style="left:4px;top:577px;width:1028px;height:25px;background:#efefef;"></div>
<div style="left:505px;top:577px;width:187px;height:25px;background:#fdf8f4;"></div>
<div style="left:693px;top:577px;width:202px;height:25px;background:#eef6fb;"></div>
<div style="left:5px;top:577px;width:80px;height:25px;background:#0088ff;"></div>
<div style="left:4px;top:603px;width:1028px;height:25px;background:#fff;"></div>
<div style="left:505px;top:603px;width:187px;height:25px;background:#fdf8f4;"></div>
<div style="left:693px;top:603px;width:202px;height:25px;background:#eef6fb;"></div>
<div style="left:5px;top:603px;width:80px;height:25px;background:#6a00dc;"></div>
<div style="left:4px;top:629px;width:1028px;height:25px;background:#efefef;"></div>
<div style="left:505px;top:629px;width:187px;height:25px;background:#fdf8f4;"></div>
<div style="left:693px;top:629px;width:202px;height:25px;background:#eef6fb;"></div>
<div style="left:5px;top:629px;width:80px;height:25px;background:#0088ff;"></div>
<div style="left:4px;top:655px;width:1028px;height:25px;background:#fff;"></div>
<div style="left:505px;top:655px;width:187px;height:25px;background:#fdf8f4;"></div>
<div style="left:693px;top:655px;width:202px;height:25px;background:#eef6fb;"></div>
<div style="left:5px;top:655px;width:80px;height:25px;background:#0088ff;"></div>
<div style="left:4px;top:681px;width:1028px;height:25px;background:#efefef;"></div>
<div style="left:505px;top:681px;width:187px;height:25px;background:#fdf8f4;"></div>
<div style="left:693px;top:681px;width:202px;height:25px;background:#eef6fb;"></div>
<div style="left:5px;top:681px;width:80px;height:25px;background:#0088ff;"></div>
<div style="left:4px;top:706px;width:1028px;height:26px;background:#fff;"></div>
<div style="left:4px;top:407px;width:1028px;height:1px;background:#c8c8c8;"></div>
<div style="left:504px;top:427px;width:188px;height:1px;background:#c8c8c8;"></div>
<div style="left:692px;top:427px;width:203px;height:1px;background:#c8c8c8;"></div>
<div style="left:895px;top:427px;width:137px;height:1px;background:#c8c8c8;"></div>
<div style="left:4px;top:446px;width:1028px;height:1px;background:#c8c8c8;"></div>
<div style="left:4px;top:472px;width:1028px;height:1px;background:#c8c8c8;"></div>
<div style="left:4px;top:498px;width:1028px;height:1px;background:#c8c8c8;"></div>
<div style="left:4px;top:524px;width:1028px;height:1px;background:#c8c8c8;"></div>
<div style="left:4px;top:550px;width:1028px;height:1px;background:#c8c8c8;"></div>
<div style="left:4px;top:576px;width:1028px;height:1px;background:#c8c8c8;"></div>
<div style="left:4px;top:602px;width:1028px;height:1px;background:#c8c8c8;"></div>
<div style="left:4px;top:628px;width:1028px;height:1px;background:#c8c8c8;"></div>
<div style="left:4px;top:654px;width:1028px;height:1px;background:#c8c8c8;"></div>
<div style="left:4px;top:680px;width:1028px;height:1px;background:#c8c8c8;"></div>
<div style="left:4px;top:706px;width:1028px;height:1px;background:#c8c8c8;"></div>
<div style="left:4px;top:732px;width:1028px;height:1px;background:#c8c8c8;"></div>
<div style="left:4px;top:407px;width:1px;height:326px;background:#c8c8c8;"></div>
<div style="left:85px;top:446px;width:1px;height:260px;background:#c8c8c8;"></div>
<div style="left:85px;top:407px;width:1px;height:39px;background:#c8c8c8;"></div>
<div style="left:162px;top:446px;width:1px;height:260px;background:#c8c8c8;"></div>
<div style="left:162px;top:407px;width:1px;height:39px;background:#c8c8c8;"></div>
<div style="left:302px;top:446px;width:1px;height:260px;background:#c8c8c8;"></div>
<div style="left:302px;top:407px;width:1px;height:39px;background:#c8c8c8;"></div>
<div style="left:394px;top:446px;width:1px;height:260px;background:#c8c8c8;"></div>
<div style="left:394px;top:407px;width:1px;height:39px;background:#c8c8c8;"></div>
<div style="left:434px;top:446px;width:1px;height:260px;background:#c8c8c8;"></div>
<div style="left:434px;top:407px;width:1px;height:39px;background:#c8c8c8;"></div>
<div style="left:504px;top:446px;width:1px;height:260px;background:#c8c8c8;"></div>
<div style="left:504px;top:407px;width:1px;height:39px;background:#c8c8c8;"></div>
<div style="left:553px;top:446px;width:1px;height:260px;background:#c8c8c8;"></div>
<div style="left:553px;top:427px;width:1px;height:19px;background:#c8c8c8;"></div>
<div style="left:639px;top:446px;width:1px;height:260px;background:#c8c8c8;"></div>
<div style="left:639px;top:427px;width:1px;height:19px;background:#c8c8c8;"></div>
<div style="left:692px;top:446px;width:1px;height:260px;background:#c8c8c8;"></div>
<div style="left:692px;top:407px;width:1px;height:39px;background:#c8c8c8;"></div>
<div style="left:759px;top:446px;width:1px;height:260px;background:#c8c8c8;"></div>
<div style="left:759px;top:427px;width:1px;height:19px;background:#c8c8c8;"></div>
<div style="left:826px;top:446px;width:1px;height:260px;background:#c8c8c8;"></div>
<div style="left:826px;top:427px;width:1px;height:19px;background:#c8c8c8;"></div>
<div style="left:895px;top:446px;width:1px;height:260px;background:#c8c8c8;"></div>
<div style="left:895px;top:407px;width:1px;height:39px;background:#c8c8c8;"></div>
<div style="left:934px;top:446px;width:1px;height:260px;background:#c8c8c8;"></div>
<div style="left:934px;top:427px;width:1px;height:19px;background:#c8c8c8;"></div>
<div style="left:973px;top:446px;width:1px;height:260px;background:#c8c8c8;"></div>
<div style="left:973px;top:427px;width:1px;height:19px;background:#c8c8c8;"></div>
<div style="left:1031px;top:407px;width:1px;height:326px;background:#c8c8c8;"></div>
<div style="left:5px;top:472px;width:80px;height:1px;background:#9aa1f6;"></div>
<div style="left:5px;top:498px;width:80px;height:1px;background:#9aa1f6;"></div>
<div style="left:5px;top:524px;width:80px;height:1px;background:#7fc3ff;"></div>
<div style="left:5px;top:550px;width:80px;height:1px;background:#9aa1f6;"></div>
<div style="left:5px;top:576px;width:80px;height:1px;background:#9aa1f6;"></div>
<div style="left:5px;top:602px;width:80px;height:1px;background:#9aa1f6;"></div>
<div style="left:5px;top:628px;width:80px;height:1px;background:#9aa1f6;"></div>
<div style="left:5px;top:654px;width:80px;height:1px;background:#7fc3ff;"></div>
<div style="left:5px;top:680px;width:80px;height:1px;background:#7fc3ff;"></div>
<div class="t" style="left:5px;top:408px;width:80px;height:38px;line-height:38px;color:#262626;font-size:12px;font-weight:normal;text-align:center;">类型</div>
<div class="t" style="left:86px;top:408px;width:76px;height:38px;line-height:38px;color:#262626;font-size:12px;font-weight:normal;text-align:center;">日期</div>
<div class="t" style="left:163px;top:408px;width:139px;height:38px;line-height:38px;color:#262626;font-size:12px;font-weight:normal;text-align:center;">主场</div>
<div class="t" style="left:303px;top:408px;width:91px;height:38px;line-height:38px;color:#262626;font-size:12px;font-weight:normal;text-align:center;">比分(半场)</div>
<div class="t" style="left:395px;top:408px;width:39px;height:38px;line-height:38px;color:#262626;font-size:12px;font-weight:normal;text-align:center;">角球</div>
<div class="t" style="left:435px;top:408px;width:69px;height:38px;line-height:38px;color:#262626;font-size:12px;font-weight:normal;text-align:center;">客场</div>
<div class="t" style="left:505px;top:428px;width:48px;height:18px;line-height:18px;color:#262626;font-size:12px;font-weight:normal;text-align:center;">主</div>
<div class="t" style="left:554px;top:428px;width:85px;height:18px;line-height:18px;color:#262626;font-size:12px;font-weight:normal;text-align:center;">让球</div>
<div class="t" style="left:640px;top:428px;width:52px;height:18px;line-height:18px;color:#262626;font-size:12px;font-weight:normal;text-align:center;">客</div>
<div class="t" style="left:693px;top:428px;width:66px;height:18px;line-height:18px;color:#262626;font-size:12px;font-weight:normal;text-align:center;">主</div>
<div class="t" style="left:760px;top:428px;width:66px;height:18px;line-height:18px;color:#262626;font-size:12px;font-weight:normal;text-align:center;">和</div>
<div class="t" style="left:827px;top:428px;width:68px;height:18px;line-height:18px;color:#262626;font-size:12px;font-weight:normal;text-align:center;">客</div>
<div class="t" style="left:896px;top:428px;width:38px;height:18px;line-height:18px;color:#262626;font-size:12px;font-weight:normal;text-align:center;">胜负</div>
<div class="t" style="left:935px;top:428px;width:38px;height:18px;line-height:18px;color:#262626;font-size:12px;font-weight:normal;text-align:center;">让球</div>
<div class="t" style="left:974px;top:428px;width:57px;height:18px;line-height:18px;color:#262626;font-size:12px;font-weight:normal;text-align:center;">进球数</div>
<div class="t" style="left:5px;top:447px;width:80px;height:25px;line-height:25px;color:#fff;font-size:12px;font-weight:normal;text-align:center;">意甲</div>
<div class="t" style="left:86px;top:448px;width:76px;height:25px;line-height:25px;color:#262626;font-size:12px;font-weight:normal;text-align:center;">24-10-27</div>
<div class="t" style="left:163px;top:447px;width:139px;height:25px;line-height:25px;color:#1e6e16;font-size:12px;font-weight:normal;text-align:center;">拉齐奥</div>
<div class="t" style="left:303px;top:448px;width:91px;height:25px;line-height:25px;color:#262626;font-size:12px;font-weight:normal;text-align:center;"><span style="color:#cc1222">3-0</span>(1-0)</div>
<div class="t" style="left:395px;top:448px;width:39px;height:25px;line-height:25px;color:#262626;font-size:12px;font-weight:normal;text-align:center;">7-4</div>
<div class="t" style="left:435px;top:447px;width:69px;height:25px;line-height:25px;color:#262626;font-size:12px;font-weight:normal;text-align:center;">热那亚</div>
<div class="t" style="left:505px;top:448px;width:48px;height:25px;line-height:25px;color:#262626;font-size:12px;font-weight:normal;text-align:center;">0.97</div>
<div class="t" style="left:554px;top:447px;width:85px;height:25px;line-height:25px;color:#262626;font-size:12px;font-weight:normal;text-align:center;">一/球半</div>
<div class="t" style="left:640px;top:448px;width:52px;height:25px;line-height:25px;color:#262626;font-size:12px;font-weight:normal;text-align:center;">0.92</div>
<div class="t" style="left:693px;top:448px;width:66px;height:25px;line-height:25px;color:#262626;font-size:12px;font-weight:normal;text-align:center;">1.43</div>
<div class="t" style="left:760px;top:448px;width:66px;height:25px;line-height:25px;color:#262626;font-size:12px;font-weight:normal;text-align:center;">4.54</div>
<div class="t" style="left:827px;top:448px;width:68px;height:25px;line-height:25px;color:#262626;font-size:12px;font-weight:normal;text-align:center;">7.35</div>
<div class="t" style="left:896px;top:447px;width:38px;height:25px;line-height:25px;color:#dc1a14;font-size:12px;font-weight:normal;text-align:center;">胜</div>
<div class="t" style="left:935px;top:447px;width:38px;height:25px;line-height:25px;color:#dc1a14;font-size:12px;font-weight:normal;text-align:center;">赢</div>
<div class="t" style="left:974px;top:447px;width:57px;height:25px;line-height:25px;color:#dc1a14;font-size:12px;font-weight:normal;text-align:center;">大</div>
<div class="t" style="left:5px;top:473px;width:80px;height:25px;line-height:25px;color:#fff;font-size:12px;font-weight:normal;text-align:center;">欧罗巴杯</div>
<div class="t" style="left:86px;top:474px;width:76px;height:25px;line-height:25px;color:#262626;font-size:12px;font-weight:normal;text-align:center;">24-10-25</div>
<div class="t" style="left:163px;top:473px;width:139px;height:25px;line-height:25px;color:#262626;font-size:12px;font-weight:normal;text-align:center;"><span class="rc">1</span>特温特</div>
<div class="t" style="left:303px;top:474px;width:91px;height:25px;line-height:25px;color:#262626;font-size:12px;font-weight:normal;text-align:center;"><span style="color:#cc1222">0-2</span>(0-1)</div>
<div class="t" style="left:395px;top:474px;width:39px;height:25px;line-height:25px;color:#262626;font-size:12px;font-weight:normal;text-align:center;">2-4</div>
<div class="t" style="left:435px;top:473px;width:69px;height:25px;line-height:25px;color:#1e6e16;font-size:12px;font-weight:normal;text-align:center;">拉齐奥</div>
<div class="t" style="left:505px;top:474px;width:48px;height:25px;line-height:25px;color:#262626;font-size:12px;font-weight:normal;text-align:center;">1.02</div>
<div class="t" style="left:554px;top:473px;width:85px;height:25px;line-height:25px;color:#262626;font-size:12px;font-weight:normal;text-align:center;">平/半</div>
<div class="t" style="left:640px;top:474px;width:52px;height:25px;line-height:25px;color:#262626;font-size:12px;font-weight:normal;text-align:center;">0.87</div>
<div class="t" style="left:693px;top:474px;width:66px;height:25px;line-height:25px;color:#262626;font-size:12px;font-weight:normal;text-align:center;">2.44</div>
<div class="t" style="left:760px;top:474px;width:66px;height:25px;line-height:25px;color:#262626;font-size:12px;font-weight:normal;text-align:center;">3.31</div>
<div class="t" style="left:827px;top:474px;width:68px;height:25px;line-height:25px;color:#262626;font-size:12px;font-weight:normal;text-align:center;">2.90</div>
<div class="t" style="left:896px;top:473px;width:38px;height:25px;line-height:25px;color:#dc1a14;font-size:12px;font-weight:normal;text-align:center;">胜</div>
<div class="t" style="left:935px;top:473px;width:38px;height:25px;line-height:25px;color:#dc1a14;font-size:12px;font-weight:normal;text-align:center;">赢</div>
<div class="t" style="left:974px;top:473px;width:57px;height:25px;line-height:25px;color:#1818b0;font-size:12px;font-weight:normal;text-align:center;">小</div>
<div class="t" style="left:5px;top:499px;width:80px;height:25px;line-height:25px;color:#fff;font-size:12px;font-weight:normal;text-align:center;">意甲</div>
<div class="t" style="left:86px;top:500px;width:76px;height:25px;line-height:25px;color:#262626;font-size:12px;font-weight:normal;text-align:center;">24-10-20</div>
<div class="t" style="left:163px;top:499px;width:139px;height:25px;line-height:25px;color:#262626;font-size:12px;font-weight:normal;text-align:center;">尤文图斯</div>
<div class="t" style="left:303px;top:500px;width:91px;height:25px;line-height:25px;color:#262626;font-size:12px;font-weight:normal;text-align:center;"><span style="color:#cc1222">1-0</span>(0-0)</div>
<div class="t" style="left:395px;top:500px;width:39px;height:25px;line-height:25px;color:#262626;font-size:12px;font-weight:normal;text-align:center;">7-1</div>
<div class="t" style="left:435px;top:499px;width:69px;height:25px;line-height:25px;color:#1e6e16;font-size:12px;font-weight:normal;text-align:center;">拉齐奥<span class="rc">1</span></div>
<div class="t" style="left:505px;top:500px;width:48px;height:25px;line-height:25px;color:#262626;font-size:12px;font-weight:normal;text-align:center;">0.81</div>
<div class="t" style="left:554px;top:499px;width:85px;height:25px;line-height:25px;color:#262626;font-size:12px;font-weight:normal;text-align:center;">平/半</div>
<div class="t" style="left:640px;top:500px;width:52px;height:25px;line-height:25px;color:#262626;font-size:12px;font-weight:normal;text-align:center;">1.08</div>
<div class="t" style="left:693px;top:500px;width:66px;height:25px;line-height:25px;color:#262626;font-size:12px;font-weight:normal;text-align:center;">2.08</div>
<div class="t" style="left:760px;top:500px;width:66px;height:25px;line-height:25px;color:#262626;font-size:12px;font-weight:normal;text-align:center;">3.16</div>
<div class="t" style="left:827px;top:500px;width:68px;height:25px;line-height:25px;color:#262626;font-size:12px;font-weight:normal;text-align:center;">3.90</div>
<div class="t" style="left:896px;top:499px;width:38px;height:25px;line-height:25px;color:#1818b0;font-size:12px;font-weight:normal;text-align:center;">负</div>
<div class="t" style="left:935px;top:499px;width:38px;height:25px;line-height:25px;color:#1818b0;font-size:12px;font-weight:normal;text-align:center;">输</div>
<div class="t" style="left:974px;top:499px;width:57px;height:25px;line-height:25px;color:#1818b0;font-size:12px;font-weight:normal;text-align:center;">小</div>
<div class="t" style="left:5px;top:525px;width:80px;height:25px;line-height:25px;color:#fff;font-size:12px;font-weight:normal;text-align:center;">意甲</div>
<div class="t" style="left:86px;top:526px;width:76px;height:25px;line-height:25px;color:#262626;font-size:12px;font-weight:normal;text-align:center;">24-10-06</div>
<div class="t" style="left:163px;top:525px;width:139px;height:25px;line-height:25px;color:#1e6e16;font-size:12px;font-weight:normal;text-align:center;">拉齐奥</div>
<div class="t" style="left:303px;top:526px;width:91px;height:25px;line-height:25px;color:#262626;font-size:12px;font-weight:normal;text-align:center;"><span style="color:#cc1222">2-1</span>(1-1)</div>
<div class="t" style="left:395px;top:526px;width:39px;height:25px;line-height:25px;color:#262626;font-size:12px;font-weight:normal;text-align:center;">5-3</div>
<div class="t" style="left:435px;top:525px;width:69px;height:25px;line-height:25px;color:#262626;font-size:12px;font-weight:normal;text-align:center;">恩波利</div>
<div class="t" style="left:505px;top:526px;width:48px;height:25px;line-height:25px;color:#262626;font-size:12px;font-weight:normal;text-align:center;">1.03</div>
<div class="t" style="left:554px;top:525px;width:85px;height:25px;line-height:25px;color:#262626;font-size:12px;font-weight:normal;text-align:center;">一球</div>
<div class="t" style="left:640px;top:526px;width:52px;height:25px;line-height:25px;color:#262626;font-size:12px;font-weight:normal;text-align:center;">0.86</div>
<div class="t" style="left:693px;top:526px;width:66px;height:25px;line-height:25px;color:#262626;font-size:12px;font-weight:normal;text-align:center;">1.58</div>
<div class="t" style="left:760px;top:526px;width:66px;height:25px;line-height:25px;color:#262626;font-size:12px;font-weight:normal;text-align:center;">3.92</div>
<div class="t" style="left:827px;top:526px;width:68px;height:25px;line-height:25px;color:#262626;font-size:12px;font-weight:normal;text-align:center;">5.92</div>
<div class="t" style="left:896px;top:525px;width:38px;height:25px;line-height:25px;color:#dc1a14;font-size:12px;font-weight:normal;text-align:center;">胜</div>
<div class="t" style="left:935px;top:525px;width:38px;height:25px;line-height:25px;color:#1e6e16;font-size:12px;font-weight:normal;text-align:center;">走</div>
<div class="t" style="left:974px;top:525px;width:57px;height:25px;line-height:25px;color:#dc1a14;font-size:12px;font-weight:normal;text-align:center;">大</div>
<div class="t" style="left:5px;top:551px;width:80px;height:25px;line-height:25px;color:#fff;font-size:12px;font-weight:normal;text-align:center;">欧罗巴杯</div>
<div class="t" style="left:86px;top:552px;width:76px;height:25px;line-height:25px;color:#262626;font-size:12px;font-weight:normal;text-align:center;">24-10-04</div>
<div class="t" style="left:163px;top:551px;width:139px;height:25px;line-height:25px;color:#1e6e16;font-size:12px;font-weight:normal;text-align:center;">拉齐奥</div>
<div class="t" style="left:303px;top:552px;width:91px;height:25px;line-height:25px;color:#262626;font-size:12px;font-weight:normal;text-align:center;"><span style="color:#cc1222">4-1</span>(2-1)</div>
<div class="t" style="left:395px;top:552px;width:39px;height:25px;line-height:25px;color:#262626;font-size:12px;font-weight:normal;text-align:center;">6-3</div>
<div class="t" style="left:435px;top:551px;width:69px;height:25px;line-height:25px;color:#262626;font-size:12px;font-weight:normal;text-align:center;">尼斯</div>
<div class="t" style="left:505px;top:552px;width:48px;height:25px;line-height:25px;color:#262626;font-size:12px;font-weight:normal;text-align:center;">0.81</div>
<div class="t" style="left:554px;top:551px;width:85px;height:25px;line-height:25px;color:#262626;font-size:12px;font-weight:normal;text-align:center;">平/半</div>
<div class="t" style="left:640px;top:552px;width:52px;height:25px;line-height:25px;color:#262626;font-size:12px;font-weight:normal;text-align:center;">1.08</div>
<div class="t" style="left:693px;top:552px;width:66px;height:25px;line-height:25px;color:#262626;font-size:12px;font-weight:normal;text-align:center;">1.95</div>
<div class="t" style="left:760px;top:552px;width:66px;height:25px;line-height:25px;color:#262626;font-size:12px;font-weight:normal;text-align:center;">3.47</div>
<div class="t" style="left:827px;top:552px;width:68px;height:25px;line-height:25px;color:#262626;font-size:12px;font-weight:normal;text-align:center;">3.94</div>
<div class="t" style="left:896px;top:551px;width:38px;height:25px;line-height:25px;color:#dc1a14;font-size:12px;font-weight:normal;text-align:center;">胜</div>
<div class="t" style="left:935px;top:551px;width:38px;height:25px;line-height:25px;color:#dc1a14;font-size:12px;font-weight:normal;text-align:center;">赢</div>
<div class="t" style="left:974px;top:551px;width:57px;height:25px;line-height:25px;color:#dc1a14;font-size:12px;font-weight:normal;text-align:center;">大</div>
<div class="t" style="left:5px;top:577px;width:80px;height:25px;line-height:25px;color:#fff;font-size:12px;font-weight:normal;text-align:center;">意甲</div>
<div class="t" style="left:86px;top:578px;width:76px;height:25px;line-height:25px;color:#262626;font-size:12px;font-weight:normal;text-align:center;">24-09-29</div>
<div class="t" style="left:163px;top:577px;width:139px;height:25px;line-height:25px;color:#262626;font-size:12px;font-weight:normal;text-align:center;">都灵</div>
<div class="t" style="left:303px;top:578px;width:91px;height:25px;line-height:25px;color:#262626;font-size:12px;font-weight:normal;text-align:center;"><span style="color:#cc1222">2-3</span>(0-1)</div>
<div class="t" style="left:395px;top:578px;width:39px;height:25px;line-height:25px;color:#262626;font-size:12px;font-weight:normal;text-align:center;">3-1</div>
<div class="t" style="left:435px;top:577px;width:69px;height:25px;line-height:25px;color:#1e6e16;font-size:12px;font-weight:normal;text-align:center;">拉齐奥</div>
<div class="t" style="left:505px;top:578px;width:48px;height:25px;line-height:25px;color:#262626;font-size:12px;font-weight:normal;text-align:center;">0.75</div>
<div class="t" style="left:554px;top:577px;width:85px;height:25px;line-height:25px;color:#262626;font-size:12px;font-weight:normal;text-align:center;">受平/半</div>
<div class="t" style="left:640px;top:578px;width:52px;height:25px;line-height:25px;color:#262626;font-size:12px;font-weight:normal;text-align:center;">1.16</div>
<div class="t" style="left:693px;top:578px;width:66px;height:25px;line-height:25px;color:#262626;font-size:12px;font-weight:normal;text-align:center;">2.99</div>
<div class="t" style="left:760px;top:578px;width:66px;height:25px;line-height:25px;color:#262626;font-size:12px;font-weight:normal;text-align:center;">3.11</div>
<div class="t" style="left:827px;top:578px;width:68px;height:25px;line-height:25px;color:#262626;font-size:12px;font-weight:normal;text-align:center;">2.50</div>
<div class="t" style="left:896px;top:577px;width:38px;height:25px;line-height:25px;color:#dc1a14;font-size:12px;font-weight:normal;text-align:center;">胜</div>
<div class="t" style="left:935px;top:577px;width:38px;height:25px;line-height:25px;color:#dc1a14;font-size:12px;font-weight:normal;text-align:center;">赢</div>
<div class="t" style="left:974px;top:577px;width:57px;height:25px;line-height:25px;color:#dc1a14;font-size:12px;font-weight:normal;text-align:center;">大</div>
<div class="t" style="left:5px;top:603px;width:80px;height:25px;line-height:25px;color:#fff;font-size:12px;font-weight:normal;text-align:center;">欧罗巴杯</div>
<div class="t" style="left:86px;top:604px;width:76px;height:25px;line-height:25px;color:#262626;font-size:12px;font-weight:normal;text-align:center;">24-09-26</div>
<div class="t" style="left:163px;top:603px;width:139px;height:25px;line-height:25px;color:#262626;font-size:12px;font-weight:normal;text-align:center;"><span class="rc">1</span>基辅迪纳摩(中)</div>
<div class="t" style="left:303px;top:604px;width:91px;height:25px;line-height:25px;color:#262626;font-size:12px;font-weight:normal;text-align:center;"><span style="color:#cc1222">0-3</span>(0-3)</div>
<div class="t" style="left:395px;top:604px;width:39px;height:25px;line-height:25px;color:#262626;font-size:12px;font-weight:normal;text-align:center;">3-3</div>
<div class="t" style="left:435px;top:603px;width:69px;height:25px;line-height:25px;color:#1e6e16;font-size:12px;font-weight:normal;text-align:center;">拉齐奥<span class="rc">1</span></div>
<div class="t" style="left:505px;top:604px;width:48px;height:25px;line-height:25px;color:#262626;font-size:12px;font-weight:normal;text-align:center;">0.92</div>
<div class="t" style="left:554px;top:603px;width:85px;height:25px;line-height:25px;color:#262626;font-size:12px;font-weight:normal;text-align:center;">受平/半</div>
<div class="t" style="left:640px;top:604px;width:52px;height:25px;line-height:25px;color:#262626;font-size:12px;font-weight:normal;text-align:center;">0.97</div>
<div class="t" style="left:693px;top:604px;width:66px;height:25px;line-height:25px;color:#262626;font-size:12px;font-weight:normal;text-align:center;">3.33</div>
<div class="t" style="left:760px;top:604px;width:66px;height:25px;line-height:25px;color:#262626;font-size:12px;font-weight:normal;text-align:center;">3.20</div>
<div class="t" style="left:827px;top:604px;width:68px;height:25px;line-height:25px;color:#262626;font-size:12px;font-weight:normal;text-align:center;">2.26</div>
<div class="t" style="left:896px;top:603px;width:38px;height:25px;line-height:25px;color:#dc1a14;font-size:12px;font-weight:normal;text-align:center;">胜</div>
<div class="t" style="left:935px;top:603px;width:38px;height:25px;line-height:25px;color:#dc1a14;font-size:12px;font-weight:normal;text-align:center;">赢</div>
<div class="t" style="left:974px;top:603px;width:57px;height:25px;line-height:25px;color:#dc1a14;font-size:12px;font-weight:normal;text-align:center;">大</div>
<div class="t" style="left:5px;top:629px;width:80px;height:25px;line-height:25px;color:#fff;font-size:12px;font-weight:normal;text-align:center;">意甲</div>
<div class="t" style="left:86px;top:630px;width:76px;height:25px;line-height:25px;color:#262626;font-size:12px;font-weight:normal;text-align:center;">24-09-22</div>
<div class="t" style="left:163px;top:629px;width:139px;height:25px;line-height:25px;color:#262626;font-size:12px;font-weight:normal;text-align:center;">佛罗伦萨</div>
<div class="t" style="left:303px;top:630px;width:91px;height:25px;line-height:25px;color:#262626;font-size:12px;font-weight:normal;text-align:center;"><span style="color:#cc1222">2-1</span>(0-1)</div>
<div class="t" style="left:395px;top:630px;width:39px;height:25px;line-height:25px;color:#262626;font-size:12px;font-weight:normal;text-align:center;">3-10</div>
<div class="t" style="left:435px;top:629px;width:69px;height:25px;line-height:25px;color:#1e6e16;font-size:12px;font-weight:normal;text-align:center;">拉齐奥</div>
<div class="t" style="left:505px;top:630px;width:48px;height:25px;line-height:25px;color:#262626;font-size:12px;font-weight:normal;text-align:center;">1.06</div>
<div class="t" style="left:554px;top:629px;width:85px;height:25px;line-height:25px;color:#262626;font-size:12px;font-weight:normal;text-align:center;">平/半</div>
<div class="t" style="left:640px;top:630px;width:52px;height:25px;line-height:25px;color:#262626;font-size:12px;font-weight:normal;text-align:center;">0.83</div>
<div class="t" style="left:693px;top:630px;width:66px;height:25px;line-height:25px;color:#262626;font-size:12px;font-weight:normal;text-align:center;">2.35</div>
<div class="t" style="left:760px;top:630px;width:66px;height:25px;line-height:25px;color:#262626;font-size:12px;font-weight:normal;text-align:center;">3.26</div>
<div class="t" style="left:827px;top:630px;width:68px;height:25px;line-height:25px;color:#262626;font-size:12px;font-weight:normal;text-align:center;">3.11</div>
<div class="t" style="left:896px;top:629px;width:38px;height:25px;line-height:25px;color:#1818b0;font-size:12px;font-weight:normal;text-align:center;">负</div>
<div class="t" style="left:935px;top:629px;width:38px;height:25px;line-height:25px;color:#1818b0;font-size:12px;font-weight:normal;text-align:center;">输</div>
<div class="t" style="left:974px;top:629px;width:57px;height:25px;line-height:25px;color:#dc1a14;font-size:12px;font-weight:normal;text-align:center;">大</div>
<div class="t" style="left:5px;top:655px;width:80px;height:25px;line-height:25px;color:#fff;font-size:12px;font-weight:normal;text-align:center;">意甲</div>
<div class="t" style="left:86px;top:656px;width:76px;height:25px;line-height:25px;color:#262626;font-size:12px;font-weight:normal;text-align:center;">24-09-17</div>
<div class="t" style="left:163px;top:655px;width:139px;height:25px;line-height:25px;color:#1e6e16;font-size:12px;font-weight:normal;text-align:center;">拉齐奥</div>
<div class="t" style="left:303px;top:656px;width:91px;height:25px;line-height:25px;color:#262626;font-size:12px;font-weight:normal;text-align:center;"><span style="color:#cc1222">2-1</span>(2-1)</div>
<div class="t" style="left:395px;top:656px;width:39px;height:25px;line-height:25px;color:#262626;font-size:12px;font-weight:normal;text-align:center;">9-6</div>
<div class="t" style="left:435px;top:655px;width:69px;height:25px;line-height:25px;color:#262626;font-size:12px;font-weight:normal;text-align:center;">维罗纳</div>
<div class="t" style="left:505px;top:656px;width:48px;height:25px;line-height:25px;color:#262626;font-size:12px;font-weight:normal;text-align:center;">0.98</div>
<div class="t" style="left:554px;top:655px;width:85px;height:25px;line-height:25px;color:#262626;font-size:12px;font-weight:normal;text-align:center;">一球</div>
<div class="t" style="left:640px;top:656px;width:52px;height:25px;line-height:25px;color:#262626;font-size:12px;font-weight:normal;text-align:center;">0.91</div>
<div class="t" style="left:693px;top:656px;width:66px;height:25px;line-height:25px;color:#262626;font-size:12px;font-weight:normal;text-align:center;">1.57</div>
<div class="t" style="left:760px;top:656px;width:66px;height:25px;line-height:25px;color:#262626;font-size:12px;font-weight:normal;text-align:center;">3.97</div>
<div class="t" style="left:827px;top:656px;width:68px;height:25px;line-height:25px;color:#262626;font-size:12px;font-weight:normal;text-align:center;">5.95</div>
<div class="t" style="left:896px;top:655px;width:38px;height:25px;line-height:25px;color:#dc1a14;font-size:12px;font-weight:normal;text-align:center;">胜</div>
<div class="t" style="left:935px;top:655px;width:38px;height:25px;line-height:25px;color:#1e6e16;font-size:12px;font-weight:normal;text-align:center;">走</div>
<div class="t" style="left:974px;top:655px;width:57px;height:25px;line-height:25px;color:#dc1a14;font-size:12px;font-weight:normal;text-align:center;">大</div>
<div class="t" style="left:5px;top:681px;width:80px;height:25px;line-height:25px;color:#fff;font-size:12px;font-weight:normal;text-align:center;">意甲</div>
<div class="t" style="left:86px;top:682px;width:76px;height:25px;line-height:25px;color:#262626;font-size:12px;font-weight:normal;text-align:center;">24-09-01</div>
<div class="t" style="left:163px;top:681px;width:139px;height:25px;line-height:25px;color:#1e6e16;font-size:12px;font-weight:normal;text-align:center;">拉齐奥</div>
<div class="t" style="left:303px;top:682px;width:91px;height:25px;line-height:25px;color:#262626;font-size:12px;font-weight:normal;text-align:center;"><span style="color:#cc1222">2-2</span>(0-1)</div>
<div class="t" style="left:395px;top:682px;width:39px;height:25px;line-height:25px;color:#262626;font-size:12px;font-weight:normal;text-align:center;">5-7</div>
<div class="t" style="left:435px;top:681px;width:69px;height:25px;line-height:25px;color:#262626;font-size:12px;font-weight:normal;text-align:center;">AC米兰</div>
<div class="t" style="left:505px;top:682px;width:48px;height:25px;line-height:25px;color:#262626;font-size:12px;font-weight:normal;text-align:center;">1.03</div>
<div class="t" style="left:554px;top:681px;width:85px;height:25px;line-height:25px;color:#262626;font-size:12px;font-weight:normal;text-align:center;">平手</div>
<div class="t" style="left:640px;top:682px;width:52px;height:25px;line-height:25px;color:#262626;font-size:12px;font-weight:normal;text-align:center;">0.86</div>
<div class="t" style="left:693px;top:682px;width:66px;height:25px;line-height:25px;color:#262626;font-size:12px;font-weight:normal;text-align:center;">2.80</div>
<div class="t" style="left:760px;top:682px;width:66px;height:25px;line-height:25px;color:#262626;font-size:12px;font-weight:normal;text-align:center;">3.36</div>
<div class="t" style="left:827px;top:682px;width:68px;height:25px;line-height:25px;color:#262626;font-size:12px;font-weight:normal;text-align:center;">2.51</div>
<div class="t" style="left:896px;top:681px;width:38px;height:25px;line-height:25px;color:#1e6e16;font-size:12px;font-weight:normal;text-align:center;">平</div>
<div class="t" style="left:935px;top:681px;width:38px;height:25px;line-height:25px;color:#1e6e16;font-size:12px;font-weight:normal;text-align:center;">走</div>
<div class="t" style="left:974px;top:681px;width:57px;height:25px;line-height:25px;color:#dc1a14;font-size:12px;font-weight:normal;text-align:center;">大</div>
<div class="t" style="left:5px;top:707px;width:1026px;height:25px;line-height:25px;color:#444;font-size:12px;font-weight:normal;text-align:center;letter-spacing:0.2px">近<span style="color:#d02828">10</span>场,胜7平1负2, 胜率:<span style="color:#d02828">70%</span> 让胜率:<span style="color:#d02828">50%</span> 大率:<span style="color:#d02828">80%</span> 单率:<span style="color:#d02828">80%</span></div>
<div class="sel" style="left:538px;top:408px;width:60px;height:19px;"><span style="font-family:'Liberation Sans', sans-serif;">Crow*</span><svg width="10" height="7" viewBox="0 0 10 7"><path d="M1 1.2 L5 5.2 L9 1.2" stroke="#000" stroke-width="1.8" fill="none"/></svg></div>
<div class="sel" style="left:607px;top:408px;width:50px;height:19px;"><span style="font-family:'Liberation Sans', sans-serif;">终指</span><svg width="10" height="7" viewBox="0 0 10 7"><path d="M1 1.2 L5 5.2 L9 1.2" stroke="#000" stroke-width="1.8" fill="none"/></svg></div>
<div class="sel" style="left:729px;top:408px;width:69px;height:19px;"><span style="font-family:'Liberation Sans', sans-serif;">平均值</span><svg width="10" height="7" viewBox="0 0 10 7"><path d="M1 1.2 L5 5.2 L9 1.2" stroke="#000" stroke-width="1.8" fill="none"/></svg></div>
<div class="sel" style="left:807px;top:408px;width:50px;height:19px;"><span style="font-family:'Liberation Sans', sans-serif;">终指</span><svg width="10" height="7" viewBox="0 0 10 7"><path d="M1 1.2 L5 5.2 L9 1.2" stroke="#000" stroke-width="1.8" fill="none"/></svg></div>
<div class="sel" style="left:938px;top:408px;width:50px;height:19px;"><span style="font-family:'Liberation Sans', sans-serif;">全场</span><svg width="10" height="7" viewBox="0 0 10 7"><path d="M1 1.2 L5 5.2 L9 1.2" stroke="#000" stroke-width="1.8" fill="none"/></svg></div>
<div style="left:4px;top:31px;width:1028px;height:1px;background:#e3e5f5;"></div>
<div class="radio off" style="left:505px;top:11px"></div>
<div class="t" style="left:522px;top:3px;width:26px;height:30px;line-height:30px;color:#fff;font-size:12px;font-weight:normal;text-align:left;">竖版</div>
<div class="radio on" style="left:555px;top:11px"></div>
<div class="t" style="left:572px;top:3px;width:26px;height:30px;line-height:30px;color:#fff;font-size:12px;font-weight:normal;text-align:left;">横版</div>
</div></body></html>
